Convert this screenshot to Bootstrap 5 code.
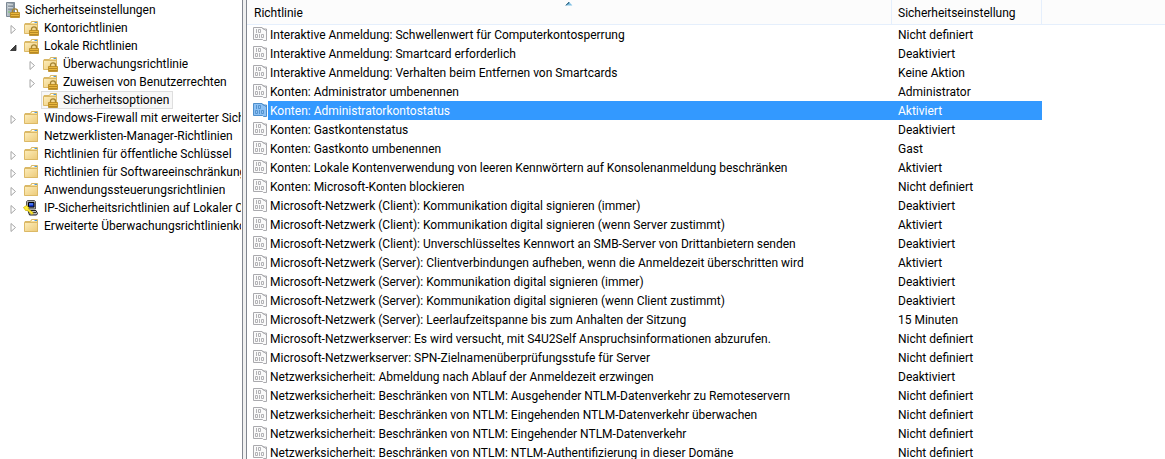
<!DOCTYPE html>
<html lang="de">
<head>
<meta charset="utf-8">
<meta name="viewport" content="width=device-width, initial-scale=1">
<title>Lokale Sicherheitsrichtlinie</title>
<link rel="stylesheet" href="https://cdn.jsdelivr.net/npm/bootstrap@5.3.0/dist/css/bootstrap.min.css">
<style>
  body { font-family: Roboto, "Liberation Sans", sans-serif; font-size: 12px; line-height: 16px; color: #000; background: #fff; }
  .tree-pane { width: 242px; padding-top: 1px; }
  .tree-pane ul ul { padding-left: 19px; }
  .tree-line { height: 18px; padding-left: 3px; }
  .tree-toggle { width: 19px; height: 18px; padding: 2px 0 0 2px; }
  .tree-link { color: #000; border: 1px solid transparent; height: 18px; min-width: 0; }
  .tree-link svg { margin-right: 5px; }
  .tree-link.active { background: #f7f7f7; border-color: #dedede; padding-right: 3px; }
  .splitter { width: 5px; background: #f0f0f0; border: solid #828790; border-width: 0 1px; }
  .policies { table-layout: fixed; border-collapse: separate; border-spacing: 0; }
  .policies th { height: 25px; padding: 2px 7px 0; background: #fcfcfc; border-right: 1px solid #e5effc; border-bottom: 1px solid #e5effc; }
  .policies th + th { padding-left: 6px; }
  .policies th:last-child { border-right: 0; }
  .policies td { height: 19px; padding: 0 6px; }
  .col-policy { width: 645px; }
  .col-setting { width: 150px; }
  .policies td:first-child { padding-right: 0; }
  .policy-name { height: 19px; padding: 2px 0 0 2px; }
  .policies td:nth-child(2) { padding-top: 1px; }
  .selected .policy-name, .selected td:nth-child(2) { background: #3399ff; color: #fff; }
  .doc { color: #aaaaae; fill: #fafafa; }
  .selected .doc { color: #4f8fcb; fill: #8cc1f5; }
  .sort-mark { left: 50%; top: 1px; }
</style>
<script src="https://cdn.jsdelivr.net/npm/bootstrap@5.3.0/dist/js/bootstrap.bundle.min.js"></script>
</head>
<body>
<svg class="position-absolute" width="0" height="0" aria-hidden="true">
  <defs>
    <linearGradient id="gold" x2="1" y2="1"><stop stop-color="#fdedbb"/><stop offset="1" stop-color="#ecca78"/></linearGradient>
    <linearGradient id="steel" x2="1"><stop stop-color="#c3ccd3"/><stop offset="1" stop-color="#7d8a94"/></linearGradient>
  </defs>
  <symbol id="lock" viewBox="0 0 10 10">
    <path d="M2.500 5V3a2.500 2.200 0 0 1 5 0v2" fill="none" stroke="#a58432" stroke-width="1.300"/>
    <path d="M.5 4.500h9V9.500h-9z" fill="#e9b73e" stroke="#b5851c" stroke-width=".8"/>
    <path d="M1 6.500h8M1 8.500h8" stroke="#a4761a" stroke-width=".7"/>
  </symbol>
  <symbol id="folder" viewBox="0 0 16 16">
    <path d="M2 3.500h5.500l1-2h6v12H2z" fill="#f6dd96" stroke="#d9b867"/>
    <path d="M9 2.500h5" stroke="#fff"/><path d="M11.500 2.500h2.500" stroke="#4e9be0"/>
    <path d="M1.500 4.500h13v9h-13z" fill="url(#gold)" stroke="#dcb966"/>
  </symbol>
  <symbol id="folder-lock" viewBox="0 0 16 16">
    <use href="#folder" width="16" height="16"/><use href="#lock" x="6" y="6" width="10" height="10"/>
  </symbol>
  <symbol id="server" viewBox="0 0 16 16">
    <path d="M2.500.5h8v14h-8z" fill="url(#steel)" stroke="#7d8994"/>
    <path d="M4 3h5M4 6h5" stroke="#f4f7f9"/><path d="M4 4h5M4 7h5" stroke="#5d6973" stroke-width=".7"/>
    <path d="M4 10h2" stroke="#79c96b" stroke-width="1.200"/>
    <use href="#lock" x="6" y="6" width="10" height="10"/>
  </symbol>
  <symbol id="ipsec" viewBox="0 0 16 16">
    <path d="M3.500 1.500l1-1h7l1 1v7.500h-9z" fill="#a5a5a5" stroke="#555"/>
    <path d="M5.500 2.500h5.500v4.500H5.500z" fill="#1539d4" stroke="#000"/><path d="M6 4h4" stroke="#75a7ff"/>
    <path d="M5 10.500h8l1.500 3-1 1.500H6.500z" fill="#bdbdbd" stroke="#222"/><path d="M8 12.500h5" stroke="#333"/>
    <path d="M.5 7.500l3-2 2.500 2.200-.8 1 5.300 4.300-1.500 1.500-5-4.500-1 1z" fill="#ffed35" stroke="#c9ad00" stroke-width=".7"/>
  </symbol>
  <symbol id="closed" viewBox="0 0 7 9"><path d="M1 .5v8l4.500-4z" fill="#fff" stroke="#a6a6a6"/></symbol>
  <symbol id="open" viewBox="0 0 7 9"><path d="M6 2v5.500H.5z" fill="#404040" stroke="#262626" stroke-width=".8"/></symbol>
  <symbol id="doc" viewBox="0 0 14 15">
    <path d="M.5.500h8.500l1 1.500h3.500v11.500h-3L9.500 12.500H.5z" stroke="currentColor"/>
    <path d="M9.500 1l4 3" fill="none" stroke="currentColor"/>
    <path d="M3.500 2v4M5.500 2.500h2v3h-2zM2.500 7.500h2v3h-2zM6.500 7v4M8.500 7.500h2v3h-2z" fill="none" stroke="currentColor" stroke-width=".9"/>
  </symbol>
</svg>

<div class="d-flex vh-100 overflow-hidden text-nowrap">
  <nav class="tree-pane flex-shrink-0 overflow-hidden" aria-label="Konsolenstruktur">
    <ul class="list-unstyled mb-0" id="tree"></ul>
  </nav>
  <div class="splitter flex-shrink-0"></div>
  <main class="flex-fill overflow-hidden">
    <table class="policies w-100 mb-0">
      <colgroup><col class="col-policy"><col class="col-setting"><col></colgroup>
      <thead>
        <tr>
          <th class="fw-normal position-relative" scope="col" aria-sort="ascending">Richtlinie
            <svg class="sort-mark position-absolute translate-middle-x" width="7" height="5"><path d="M0 4.500L3.500 1 7 4.500z" fill="#7fc0e4"/><path d="M0 4.500L3.500 1v1z" fill="#2c5f7c" stroke="#2c5f7c" stroke-width=".6"/></svg>
          </th>
          <th class="fw-normal" scope="col">Sicherheitseinstellung</th>
          <th></th>
        </tr>
      </thead>
      <tbody id="rows"></tbody>
    </table>
  </main>
</div>
<script>
  const tree = [
    { icon: 'server', text: 'Sicherheitseinstellungen', root: true, kids: [
      { icon: 'folder-lock', text: 'Kontorichtlinien', toggle: 'closed' },
      { icon: 'folder-lock', text: 'Lokale Richtlinien', toggle: 'open', kids: [
        { icon: 'folder-lock', text: 'Überwachungsrichtlinie', toggle: 'closed' },
        { icon: 'folder-lock', text: 'Zuweisen von Benutzerrechten', toggle: 'closed' },
        { icon: 'folder-lock', text: 'Sicherheitsoptionen', active: true }
      ] },
      { icon: 'folder', text: 'Windows-Firewall mit erweiterter Sicherheit', toggle: 'closed' },
      { icon: 'folder', text: 'Netzwerklisten-Manager-Richtlinien' },
      { icon: 'folder', text: 'Richtlinien für öffentliche Schlüssel', toggle: 'closed' },
      { icon: 'folder', text: 'Richtlinien für Softwareeinschränkung', toggle: 'closed' },
      { icon: 'folder', text: 'Anwendungssteuerungsrichtlinien', toggle: 'closed' },
      { icon: 'ipsec', text: 'IP-Sicherheitsrichtlinien auf Lokaler Computer', toggle: 'closed' },
      { icon: 'folder', text: 'Erweiterte Überwachungsrichtlinienkonfiguration', toggle: 'closed' }
    ] }
  ];
  const node = (n) => `<li><div class="tree-line d-flex">${
    n.root ? '' : n.toggle
      ? `<button type="button" class="tree-toggle btn border-0 flex-shrink-0 d-flex align-items-center justify-content-center" aria-label="${n.text}" aria-expanded="${n.toggle === 'open'}"><svg width="7" height="9"><use href="#${n.toggle}"/></svg></button>`
      : '<span class="tree-toggle flex-shrink-0"></span>'
    }<a href="#" class="tree-link d-flex align-items-center text-decoration-none${n.active ? ' active' : ''}"><svg class="flex-shrink-0" width="16" height="16"><use href="#${n.icon}"/></svg><span class="overflow-hidden">${n.text}</span></a></div>${
    n.kids ? `<ul class="list-unstyled${n.root ? ' ps-0' : ''}">${n.kids.map(node).join('')}</ul>` : ''}</li>`;
  document.getElementById('tree').innerHTML = tree.map(node).join('');

  const policies = [
    ['Interaktive Anmeldung: Schwellenwert für Computerkontosperrung', 'Nicht definiert'],
    ['Interaktive Anmeldung: Smartcard erforderlich', 'Deaktiviert'],
    ['Interaktive Anmeldung: Verhalten beim Entfernen von Smartcards', 'Keine Aktion'],
    ['Konten: Administrator umbenennen', 'Administrator'],
    ['Konten: Administratorkontostatus', 'Aktiviert', true],
    ['Konten: Gastkontenstatus', 'Deaktiviert'],
    ['Konten: Gastkonto umbenennen', 'Gast'],
    ['Konten: Lokale Kontenverwendung von leeren Kennwörtern auf Konsolenanmeldung beschränken', 'Aktiviert'],
    ['Konten: Microsoft-Konten blockieren', 'Nicht definiert'],
    ['Microsoft-Netzwerk (Client): Kommunikation digital signieren (immer)', 'Deaktiviert'],
    ['Microsoft-Netzwerk (Client): Kommunikation digital signieren (wenn Server zustimmt)', 'Aktiviert'],
    ['Microsoft-Netzwerk (Client): Unverschlüsseltes Kennwort an SMB-Server von Drittanbietern senden', 'Deaktiviert'],
    ['Microsoft-Netzwerk (Server): Clientverbindungen aufheben, wenn die Anmeldezeit überschritten wird', 'Aktiviert'],
    ['Microsoft-Netzwerk (Server): Kommunikation digital signieren (immer)', 'Deaktiviert'],
    ['Microsoft-Netzwerk (Server): Kommunikation digital signieren (wenn Client zustimmt)', 'Deaktiviert'],
    ['Microsoft-Netzwerk (Server): Leerlaufzeitspanne bis zum Anhalten der Sitzung', '15 Minuten'],
    ['Microsoft-Netzwerkserver: Es wird versucht, mit S4U2Self Anspruchsinformationen abzurufen.', 'Nicht definiert'],
    ['Microsoft-Netzwerkserver: SPN-Zielnamenüberprüfungsstufe für Server', 'Nicht definiert'],
    ['Netzwerksicherheit: Abmeldung nach Ablauf der Anmeldezeit erzwingen', 'Deaktiviert'],
    ['Netzwerksicherheit: Beschränken von NTLM: Ausgehender NTLM-Datenverkehr zu Remoteservern', 'Nicht definiert'],
    ['Netzwerksicherheit: Beschränken von NTLM: Eingehenden NTLM-Datenverkehr überwachen', 'Nicht definiert'],
    ['Netzwerksicherheit: Beschränken von NTLM: Eingehender NTLM-Datenverkehr', 'Nicht definiert'],
    ['Netzwerksicherheit: Beschränken von NTLM: NTLM-Authentifizierung in dieser Domäne', 'Nicht definiert']
  ];
  document.getElementById('rows').innerHTML = policies.map(([name, value, selected]) =>
    `<tr${selected ? ' class="selected" aria-selected="true"' : ''}><td><div class="d-flex align-items-center"><svg class="doc flex-shrink-0" width="15" height="15" viewBox="0 0 15 15"><use href="#doc" width="14" height="15"/></svg><span class="policy-name flex-fill">${name}</span></div></td><td>${value}</td><td></td></tr>`).join('');
</script>
</body>
</html>
